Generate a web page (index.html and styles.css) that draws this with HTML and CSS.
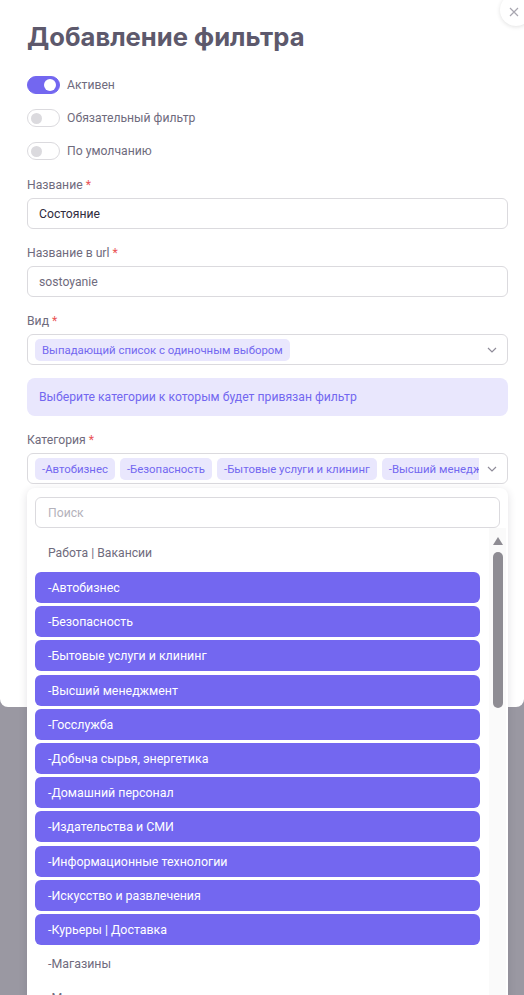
FILE: index.html
```html
<!DOCTYPE html>
<html lang="ru">
<head>
<meta charset="utf-8">
<title>Добавление фильтра</title>
<link rel="stylesheet" href="styles.css">
</head>
<body>
<div class="modal">
  <div class="close">
    <svg width="12" height="12" viewBox="0 0 12 12"><path d="M2 2 L10 10 M10 2 L2 10" stroke="#a8a6b0" stroke-width="1.2" fill="none"/></svg>
  </div>
  <h1 class="title">Добавление фильтра</h1>

  <div class="switches">
    <div class="switch-row"><span class="switch on"><span class="knob"></span></span><span class="switch-label">Активен</span></div>
    <div class="switch-row"><span class="switch"><span class="knob"></span></span><span class="switch-label">Обязательный фильтр</span></div>
    <div class="switch-row"><span class="switch"><span class="knob"></span></span><span class="switch-label">По умолчанию</span></div>
  </div>

  <div class="field">
    <div class="label">Название <span class="req">*</span></div>
    <div class="input dark">Состояние</div>
  </div>
  <div class="field">
    <div class="label">Название в url <span class="req">*</span></div>
    <div class="input">sostoyanie</div>
  </div>
  <div class="field">
    <div class="label">Вид <span class="req">*</span></div>
    <div class="input select">
      <div class="chips"><span class="chip">Выпадающий список с одиночным выбором</span></div>
      <svg class="chev" width="10" height="6" viewBox="0 0 10 6"><path d="M1 1 L5 5 L9 1" stroke="#8f8c99" stroke-width="1.2" fill="none"/></svg>
    </div>
  </div>

  <div class="alert">Выберите категории к которым будет привязан фильтр</div>

  <div class="field">
    <div class="label">Категория <span class="req">*</span></div>
    <div class="input select">
      <div class="chips">
        <span class="chip">-Автобизнес</span>
        <span class="chip">-Безопасность</span>
        <span class="chip">-Бытовые услуги и клининг</span>
        <span class="chip">-Высший менеджмент</span>
      </div>
      <svg class="chev" width="10" height="6" viewBox="0 0 10 6"><path d="M1 1 L5 5 L9 1" stroke="#8f8c99" stroke-width="1.2" fill="none"/></svg>
    </div>
  </div>
  <div class="field hidden-field">
    <div class="label">Сортировка</div>
    <div class="input">0</div>
  </div>
  <div class="field hidden-field">
    <div class="label">Значения</div>
    <div class="input"></div>
  </div>
  <div class="actions"><span class="btn">Сохранить</span></div>

  <div class="dropdown">
    <div class="search">Поиск</div>
    <div class="list">
      <div class="options">
        <div class="group">Работа | Вакансии</div>
        <div class="opt sel">-Автобизнес</div>
        <div class="opt sel">-Безопасность</div>
        <div class="opt sel">-Бытовые услуги и клининг</div>
        <div class="opt sel">-Высший менеджмент</div>
        <div class="opt sel">-Госслужба</div>
        <div class="opt sel">-Добыча сырья, энергетика</div>
        <div class="opt sel">-Домашний персонал</div>
        <div class="opt sel">-Издательства и СМИ</div>
        <div class="opt sel">-Информационные технологии</div>
        <div class="opt sel">-Искусство и развлечения</div>
        <div class="opt sel">-Курьеры | Доставка</div>
        <div class="opt">-Магазины</div>
        <div class="opt">-Медицина</div>
      </div>
      <div class="scrollbar">
        <svg class="arrow" width="10" height="8" viewBox="0 0 10 8"><path d="M5 0 L10 8 L0 8 Z" fill="#8e8c93"/></svg>
        <div class="thumb"></div>
      </div>
    </div>
  </div>
</div>
</body>
</html>
```
FILE: styles.css
```css
html, body {
  margin: 0;
  padding: 0;
  height: 995px;
  overflow: hidden;
}
body {
  background: #9a98a2;
  font-family: Roboto, "Noto Sans", sans-serif;
  font-size: 12.2px;
  color: #6f6b7d;
}
.modal {
  position: relative;
  background: #fff;
  border-radius: 0 0 8px 8px;
  padding: 20px 16px 25px 27px;
}
.close {
  position: absolute;
  top: -6px;
  right: -8px;
  width: 32px;
  height: 32px;
  border-radius: 50%;
  background: #fff;
  box-shadow: 0 1px 4px rgba(0,0,0,0.12);
  display: flex;
  align-items: center;
  justify-content: center;
}
.close svg { margin-left: -4px; margin-top: 4px; }
.title {
  margin: 0;
  font-family: Inter, Roboto, sans-serif;
  font-size: 25.6px;
  line-height: 34px;
  font-weight: 700;
  color: #5d596c;
}
.switches {
  margin-top: 22px;
  display: flex;
  flex-direction: column;
  gap: 15px;
}
.switch-row {
  display: flex;
  align-items: center;
  gap: 7px;
  height: 18px;
}
.switch {
  box-sizing: border-box;
  width: 33px;
  height: 18px;
  border-radius: 9px;
  border: 1px solid #dbdade;
  background: #fff;
  display: flex;
  align-items: center;
  padding: 0 3px;
}
.switch .knob {
  width: 11px;
  height: 11px;
  border-radius: 50%;
  background: #dbdade;
}
.switch.on {
  background: #7367f0;
  border-color: #7367f0;
  justify-content: flex-end;
}
.switch.on .knob { background: #fff; width: 12px; height: 12px; }
.switch-label { color: #6f6b7d; }

.field { margin-top: 15px; }
.switches + .field { margin-top: 16px; }
.label {
  line-height: 18px;
  margin-bottom: 4px;
  color: #6f6b7d;
}
.req { color: #ea5455; }
.input {
  box-sizing: border-box;
  height: 31px;
  border: 1px solid #dbdade;
  border-radius: 6px;
  padding: 0 11px;
  display: flex;
  align-items: center;
  color: #6f6b7d;
}
.input.dark { color: #2f2b3d; }
.input.select { padding: 0 7px; gap: 8px; }
.chips {
  flex: 1;
  display: flex;
  gap: 5px;
  overflow: hidden;
  white-space: nowrap;
}
.chip {
  flex: none;
  background: #e9e7fd;
  color: #7367f0;
  border-radius: 5px;
  height: 22px;
  line-height: 22px;
  padding: 0 7px;
  font-size: 11.4px;
}
.chev { flex: none; margin-right: 3px; }
.alert {
  margin-top: 13px;
  height: 38px;
  box-sizing: border-box;
  background: #e9e7fd;
  color: #7367f0;
  border-radius: 8px;
  padding: 0 12px;
  display: flex;
  align-items: center;
}
.hidden-field .label { color: #5d596c; }
.actions { margin-top: 24px; height: 38px; }
.btn {
  display: inline-block;
  background: #7367f0;
  color: #fff;
  border-radius: 6px;
  padding: 0 18px;
  line-height: 38px;
}

.dropdown {
  position: absolute;
  top: 488px;
  left: 27px;
  width: 481px;
  height: 520px;
  box-sizing: border-box;
  background: #fff;
  border-radius: 8px;
  box-shadow: 0 2px 8px rgba(47,43,61,0.14);
  padding: 9px 1px 0 8px;
  overflow: hidden;
}
.search {
  box-sizing: border-box;
  height: 31px;
  margin-right: 7px;
  border: 1px solid #dbdade;
  border-radius: 6px;
  padding: 0 12px;
  display: flex;
  align-items: center;
  color: #b4b2bb;
}
.list {
  display: flex;
  gap: 9px;
}
.options {
  width: 445px;
  padding-top: 8px;
}
.group {
  line-height: 34px;
  padding-left: 13px;
  margin-bottom: 2px;
  color: #6f6b7d;
}
.opt {
  height: 31px;
  line-height: 31px;
  padding-left: 13px;
  border-radius: 6px;
  margin-bottom: 3.2px;
  color: #6f6b7d;
  font-size: 12.4px;
}
.opt.sel {
  background: #7367f0;
  color: #fff;
}
.scrollbar {
  width: 17px;
  background: #fafafa;
  display: flex;
  flex-direction: column;
  align-items: center;
  padding-top: 9px;
  height: 480px;
}
.arrow { display: block; }
.thumb {
  margin-top: 7px;
  width: 10px;
  height: 156px;
  border-radius: 5px;
  background: #8e8c93;
}
```
